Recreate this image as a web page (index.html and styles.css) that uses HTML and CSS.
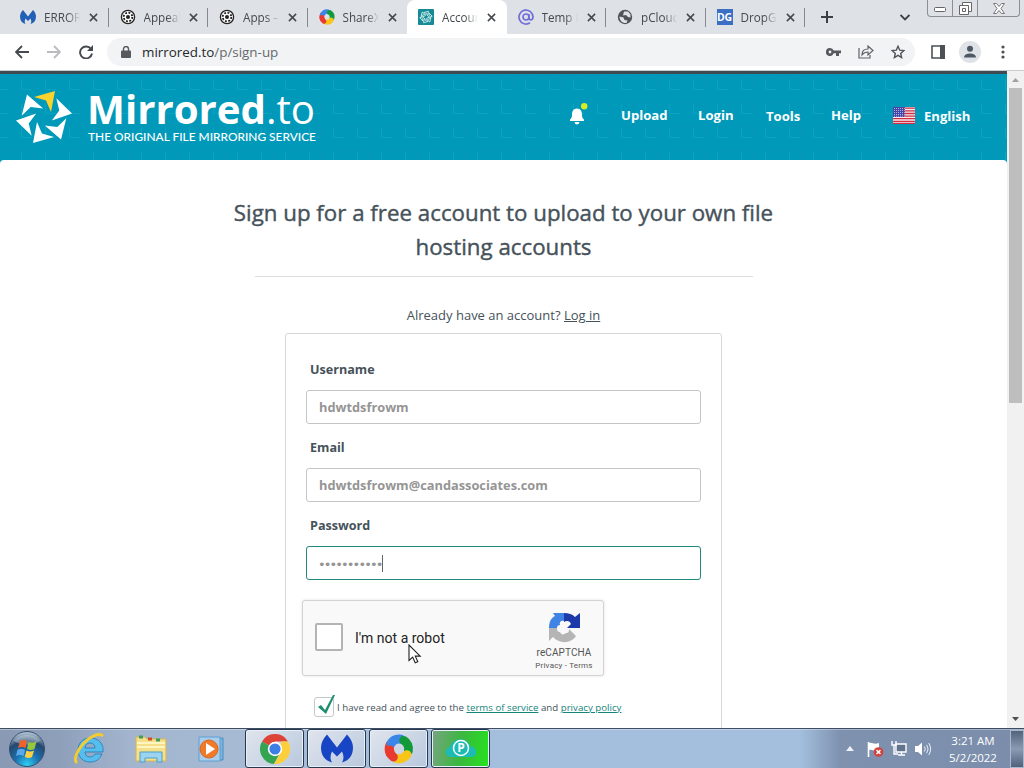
FILE: index.html
```
<!DOCTYPE html>
<html lang="en">
<head>
  <meta charset="UTF-8">
  <meta name="viewport" content="width=device-width, initial-scale=1.0">
  <title>Account sign up</title>
  <link rel="stylesheet" href="styles.css">
</head>
<body>

  <!-- shared shapes -->
  <svg class="defs" width="0" height="0">
    <symbol id="x" viewBox="0 0 10 10"><path d="M1 1l8 8M9 1L1 9" stroke="#45494d" stroke-width="1.7" fill="none"/></symbol>
    <symbol id="mb" viewBox="0 0 32 28"><path d="M6 0l10 13L26 0c4 4 6 9 6 13 0 8-4 13-11 15 2-3 2-7 0-11l-5 5-5-5c-2 4-2 8 0 11C4 26 0 21 0 13 0 9 2 4 6 0z"/></symbol>
    <symbol id="wheel" viewBox="0 0 16 16"><circle cx="8" cy="8" r="6.6" fill="#fff" stroke="#222" stroke-width="1.3"/><circle cx="8" cy="8" r="4.3" fill="none" stroke="#222" stroke-width="1.8" stroke-dasharray="1.9 1.47"/><circle cx="8" cy="8" r="2" fill="#222"/></symbol>
    <symbol id="sharex" viewBox="0 0 32 32">
      <g fill="none" stroke-width="9.5" stroke-linecap="round">
        <path d="M6.500 20.500A10.500 10.500 0 0 1 6.500 11.500" stroke="#e83a30"/>
        <path d="M7.500 10A10.500 10.500 0 0 1 18 5.600" stroke="#3b86e8"/>
        <path d="M21 6.800A10.500 10.500 0 0 1 26 18" stroke="#129a3a"/>
        <path d="M24.500 22A10.500 10.500 0 0 1 13 26" stroke="#f9c518"/>
        <path d="M10 24.600A10.500 10.500 0 0 1 6 17" stroke="#e83a30"/>
      </g>
    </symbol>
    <path id="blade" d="M39 1L18 7l12 3.500L35 22z"/>
    <g id="blades">
      <use href="#blade" transform="rotate(60 28 27)"/>
      <use href="#blade" transform="rotate(120 28 27)"/>
      <use href="#blade" transform="rotate(180 28 27)"/>
      <use href="#blade" transform="rotate(240 28 27)"/>
      <use href="#blade" transform="rotate(300 28 27)"/>
    </g>
  </svg>

  <div class="tabs">
    <div class="tab"><svg class="fav" fill="#2160b5"><use href="#mb"/></svg><span>ERROR</span><svg class="x"><use href="#x"/></svg></div>
    <div class="tab"><svg class="fav"><use href="#wheel"/></svg><span>Appeal</span><svg class="x"><use href="#x"/></svg></div>
    <div class="tab"><svg class="fav"><use href="#wheel"/></svg><span>Apps – D</span><svg class="x"><use href="#x"/></svg></div>
    <div class="tab nosep"><svg class="fav"><use href="#sharex"/></svg><span>ShareX</span><svg class="x"><use href="#x"/></svg></div>
    <div class="tab active"><svg class="fav" viewBox="-8 -9 72 72"><rect x="-8" y="-9" width="72" height="72" rx="4" fill="#168a95"/><g fill="#168a95" stroke="#d9f3f2" stroke-width="3.500"><use href="#blades"/><use href="#blade"/></g></svg><span>Account</span><svg class="x"><use href="#x"/></svg></div>
    <div class="tab"><svg class="fav" viewBox="0 0 16 16" fill="none" stroke="#7270d8" stroke-width="1.700"><circle cx="8" cy="8" r="3"/><path d="M11 5v4c0 2.600 4 2.600 4-1a7 7 0 1 0-3 5.800"/></svg><span>Temp M</span><svg class="x"><use href="#x"/></svg></div>
    <div class="tab"><svg class="fav" viewBox="0 0 16 16"><circle cx="8" cy="8" r="7.200" fill="#505458"/><path d="M2.500 7.500l4 1 1 2.500 3 .5-1 2.500c-4 .5-7-2.500-7-6.500zM7 2.500h4l2.500 3v3l-2.500-.5-2-2-3 .5z" fill="#dee1e6"/></svg><span>pCloud</span><svg class="x"><use href="#x"/></svg></div>
    <div class="tab"><b class="fav dg">DG</b><span>DropGa</span><svg class="x"><use href="#x"/></svg></div>
    <svg class="plus" viewBox="0 0 12 12"><path d="M6 0v12M0 6h12" stroke="#3c4043" stroke-width="2"/></svg>
    <svg class="chev" viewBox="0 0 10 7"><path d="M.5 1L5 5.500 9.500 1" fill="none" stroke="#3c4043" stroke-width="1.800"/></svg>
    <div class="winbtns">
      <i><svg width="12" height="6" viewBox="0 0 12 6"><rect x=".5" y=".5" width="11" height="4" rx="1" fill="#fff" stroke="#666"/></svg></i>
      <i><svg width="13" height="13" viewBox="0 0 13 13" fill="#fff" stroke="#666"><path d="M3.500.5h9v9h-9z"/><path d="M.5 3.500h9v9h-9z"/><path d="M3.500 6.500h3v3h-3z"/></svg></i>
      <i><svg width="12" height="11" viewBox="0 0 12 11"><path d="M.5.5h3L6 3.500 8.500.5h3L8 5.500l3.500 5h-3L6 7.500l-2.500 3h-3l3.500-5z" fill="#fff" stroke="#777"/></svg></i>
    </div>
  </div>

  <div class="toolbar">
    <svg class="nav-ic back" viewBox="0 0 14 14"><path d="M14 7H1M7 1L1 7l6 6" fill="none" stroke="#46494d" stroke-width="1.800"/></svg>
    <svg class="nav-ic fwd" viewBox="0 0 14 14"><path d="M0 7h13M7 1l6 6-6 6" fill="none" stroke="#b9bbbe" stroke-width="1.800"/></svg>
    <svg class="nav-ic reload" viewBox="0 0 14 14"><path d="M12 4a6 6 0 1 0 1 4.500" fill="none" stroke="#46494d" stroke-width="1.900"/><path d="M14 0v6H8z" fill="#46494d"/></svg>
    <div class="address">
      <svg width="10" height="12" viewBox="0 0 10 12"><rect y="4.500" width="10" height="7.500" rx="1" fill="#55585c"/><path d="M2.500 5V3a2.500 2.500 0 0 1 5 0v2" fill="none" stroke="#55585c" stroke-width="1.400"/></svg>
      <span class="url">mirrored.to<em>/p/sign-up</em></span>
      <svg width="15" height="8" viewBox="0 0 15 8"><path fill="#55585c" d="M4 0a4 4 0 1 0 3.700 5.300H10V8h3V5.300h2V2.600H7.700A4 4 0 0 0 4 0zm0 2.600a1.400 1.400 0 1 1 0 2.800 1.400 1.400 0 0 1 0-2.800z"/></svg>
      <svg class="share" width="16" height="14" viewBox="0 0 16 14" fill="none" stroke="#5f6368" stroke-width="1.200"><path d="M1 3v10h11v-3"/><path d="M4 10c0-4 2-6 6-6V1l5 4.500L10 10V7C7 7 5.500 8 4 10z"/></svg>
      <svg width="14" height="14" viewBox="0 0 14 14"><path d="M7 1.300l1.700 3.900 4.200.4-3.200 2.800.9 4.200L7 10.400l-3.600 2.200.9-4.200L1.100 5.600l4.200-.4z" fill="none" stroke="#505458" stroke-width="1.400"/></svg>
    </div>
    <svg class="panel" width="14" height="14" viewBox="0 0 14 14"><path d="M1 1h12v12H1z" fill="none" stroke="#4d5155" stroke-width="1.600"/><path d="M9 0h5v14H9z" fill="#4d5155"/></svg>
    <svg class="avatar" width="22" height="22" viewBox="0 0 22 22"><circle cx="11" cy="11" r="11" fill="#dfe2e6"/><circle cx="11" cy="7.800" r="3" fill="#4d5866"/><path d="M5 16.500c0-5.500 12-5.500 12 0z" fill="#4d5866"/></svg>
    <svg class="dots" width="4" height="14" viewBox="0 0 4 14" fill="#4d5155"><circle cx="2" cy="2" r="1.600"/><circle cx="2" cy="7" r="1.600"/><circle cx="2" cy="12" r="1.600"/></svg>
  </div>

  <div class="view">
    <div class="site">
      <header>
        <svg class="grid" width="1007" height="86"><defs><pattern id="sq" x="21" y="4" width="24" height="24" patternUnits="userSpaceOnUse"><path d="M.5 0v12M0 11.500h12" fill="none" stroke="#0ca2c0"/><path d="M0 .5h12M11.500 0v12" fill="none" stroke="#0895b3"/></pattern></defs><rect width="1007" height="86" fill="url(#sq)"/></svg>
        <div class="logo">
          <svg width="56" height="54" viewBox="0 0 56 54">
            <g fill="#fff"><use href="#blades"/></g>
            <use href="#blade" fill="#fcd22c"/>
          </svg>
          <div class="brand">
            <div class="name"><b>Mirrored</b>.to</div>
            <div class="tag">THE ORIGINAL FILE MIRRORING SERVICE</div>
          </div>
        </div>
        <nav>
          <svg class="bell" width="18" height="22" viewBox="0 0 18 22"><path d="M7 5.500c4 0 5 3 5 6.500 0 2 .7 3.500 2 4.500v1.500H0v-1.500c1.300-1 2-2.500 2-4.500 0-3.500 1-6.500 5-6.500z" fill="#fff"/><path d="M4.500 19h5a2.500 2.500 0 0 1-5 0z" fill="#fff"/><circle cx="14.200" cy="3.200" r="3.200" fill="#d7ee22"/></svg>
          <a class="n1">Upload</a>
          <a class="n2">Login</a>
          <a class="n3">Tools</a>
          <a class="n4">Help</a>
          <svg class="flag" width="22" height="17" viewBox="0 0 22 17"><rect width="22" height="17" fill="#f3edf0"/><path d="M0 1.200h22M0 3.900h22M0 6.500h22M0 9.100h22M0 11.700h22M0 14.300h22M0 16.500h22" stroke="#d52b3d" stroke-width="1.300"/><rect width="12" height="10" fill="#4546a5"/><path d="M1 1.500h11M1 3.500h11M1 5.500h11M1 7.500h11M1 9.200h11" stroke="#c9c9ee" stroke-width=".8" stroke-dasharray="1 1"/></svg>
          <a class="n5">English</a>
        </nav>
      </header>

      <main>
        <h1>Sign up for a free account to upload to your own file<br>hosting accounts</h1>
        <hr>
        <p class="already">Already have an account? <a>Log in</a></p>
        <form>
          <label>Username</label>
          <div class="field">hdwtdsfrowm</div>
          <label>Email</label>
          <div class="field">hdwtdsfrowm@candassociates.com</div>
          <label>Password</label>
          <div class="field focus"><span class="dotsrow">•••••••••••</span><i class="caret"></i></div>
          <div class="captcha">
            <div class="tick"></div>
            <span class="robot">I'm not a robot</span>
            <div class="rc">
              <svg width="31" height="31" viewBox="0 0 31 31">
                <path d="M4 1h11v8c-3-1-5 1-4 4-2 0-3 1-3 3H0C0 10 2 6 6 4z" fill="#3f83e4"/>
                <path d="M15 1c5 0 8 1 11 4l5-4v15H18l4-4c-1-3-4-4-7-2z" fill="#1c3aa9"/>
                <path d="M0 16h8c0 3 1 4 3 4 1 3 4 3 6 1 3 0 3-2 3-4l7 7c-5 8-17 8-23 1l-4 4z" fill="#b5b5b5"/>
              </svg>
              <span class="rcname">reCAPTCHA</span>
              <span class="rcterms">Privacy - Terms</span>
            </div>
          </div>
          <div class="agree">
            <div class="checked"><svg width="20" height="22" viewBox="0 0 20 22"><path d="M2 13l3-2 4 5L17 1l2 0-9 19z" fill="#1d8f70"/></svg></div>
            <span>I have read and agree to the <a>terms of service</a> and <a>privacy policy</a></span>
          </div>
        </form>
      </main>
    </div>
    <div class="scroll">
      <svg width="17" height="16" viewBox="0 0 17 16"><path d="M5 11l3.500-4 3.500 4z" fill="#a0a0a0"/></svg>
      <div class="thumb"></div>
      <svg class="down" width="17" height="16" viewBox="0 0 17 16"><path d="M5 5l3.500 4L12 5z" fill="#505050"/></svg>
    </div>
  </div>

  <svg class="cursor" width="17" height="23" viewBox="0 0 17 23"><path d="M1 1v15.500l3.700-3.400 2.500 5.700 2.600-1.100-2.500-5.600h4.900z" fill="#fff" stroke="#222" stroke-width="1.100"/></svg>

  <div class="taskbar">
    <svg class="start" width="38" height="38" viewBox="0 0 38 38">
      <defs>
        <radialGradient id="orb" cx=".5" cy=".95" r=".9"><stop offset="0" stop-color="#2ed0f4"/><stop offset=".4" stop-color="#1b6fae"/><stop offset=".75" stop-color="#25486f"/><stop offset="1" stop-color="#a9bccd"/></radialGradient>
      </defs>
      <circle cx="19" cy="19" r="17.500" fill="url(#orb)" stroke="#38506e"/>
      <path d="M6 11C12 3 26 3 32 11c-8 5-18 5-26 0z" fill="#fff" opacity=".3"/>
      <path d="M12 11c3-1.500 5-1.500 7 .2l-1.500 7c-2-1.500-5-1.500-7.500 0z" fill="#f0622c"/>
      <path d="M20.500 12c2.500 1.300 5 1 8-.5l-2 7.500c-3 1.500-5 1.200-7.500-.2z" fill="#96c83c"/>
      <path d="M9.500 19.800c3-1.500 5-1.200 7.500 0L15.500 26c-2-1.300-5-1.300-7.500 0z" fill="#58a8ec"/>
      <path d="M18.500 20.500c2.500 1.300 5 1.200 7.600 0L24 27c-3 1.500-5 1-7.200-.3z" fill="#fbd044"/>
    </svg>
    <svg class="ie" width="32" height="32" viewBox="0 0 32 32">
      <path d="M16 5C9 5 4 10 4 17s5 12 12 12c6 0 10-3 12-8h-7c-1 2-3 3-5 3-3 0-5-2-5-5h18c1-8-4-14-13-14zm-5 10c0-3 2-5 5-5s5 2 5 5z" fill="#56bdec" stroke="#2582bd" stroke-width=".9" fill-rule="evenodd"/>
      <path d="M3 30C-1 27 3 18 9 11S25-1 29 3" fill="none" stroke="#f3cc30" stroke-width="2.800"/>
    </svg>
    <svg class="folder" width="32" height="28" viewBox="0 0 32 28">
      <path d="M1 2h9l2 2h19v22H1z" fill="#f4df8b" stroke="#d9b650"/>
      <path d="M4 2h4M21 5h4" stroke="#3d9b5e" stroke-width="3"/><path d="M13 4h4" stroke="#d44b26" stroke-width="3"/>
      <path d="M2 8h28M2 12h28" stroke="#fff5c1" stroke-width="2"/>
      <path d="M5 27V17h22v10h-5v-4H10v4z" fill="#9bd3f0" stroke="#4a9fcb"/>
    </svg>
    <svg class="wmp" width="27" height="26" viewBox="0 0 27 26"><path d="M6 2h19v22H6z" fill="#78b4e0" stroke="#4c90c6"/><path d="M1 1h21v24H1z" fill="#a9cdec" stroke="#5f9fd0"/><circle cx="11" cy="13" r="9" fill="#ef7b2a" stroke="#dc641d"/><path d="M8 7l9 6-9 6z" fill="#fff"/></svg>
    <div class="apps">
      <div class="app"><svg width="30" height="30" viewBox="0 0 30 30"><path d="M15 15L2 7.500A15 15 0 0 1 28 7.500H15z" fill="#dd4336"/><path d="M2 7.500A15 15 0 0 0 14 30l6.500-12L15 15z" fill="#34a352"/><path d="M28 7.500A15 15 0 0 1 14 30l7-12V7.500z" fill="#fdd03b"/><circle cx="15" cy="15" r="7.200" fill="#fff"/><circle cx="15" cy="15" r="5.600" fill="#3b7fe6"/></svg></div>
      <div class="app"><svg width="32" height="29" fill="#1745c4"><use href="#mb"/></svg></div>
      <div class="app"><svg width="30" height="30"><use href="#sharex"/></svg></div>
      <div class="app green"><svg width="32" height="24" viewBox="0 0 32 24"><path d="M6 20C-1 20-1 11 5 10 7 1 22-1 25 9c8 1 8 11 1 11z" fill="#1cbcb4"/><circle cx="16" cy="11" r="7.500" fill="#1cbcb4" stroke="#fff" stroke-width="1.500"/><text x="16" y="15.300" text-anchor="middle" class="p">P</text></svg></div>
    </div>
    <div class="tray">
      <svg width="8" height="5" viewBox="0 0 8 5"><path d="M0 5l4-5 4 5z" fill="#eef2f8"/></svg>
      <svg class="t1" width="17" height="16" viewBox="0 0 17 16"><path d="M1.500 1v15" stroke="#fff" stroke-width="1.600"/><path d="M2 2c3-1 5 2 10 0v7c-4 2-7-1-10 0z" fill="#fff"/><circle cx="11.500" cy="11" r="4.800" fill="#d4403c"/><path d="M9.500 9l4 4M13.500 9l-4 4" stroke="#fff" stroke-width="1.500"/></svg>
      <svg class="t2" width="16" height="15" viewBox="0 0 16 15"><path d="M5 3h10v8H5zM7 14h7M10.500 11v3" fill="#62738d" stroke="#fff" stroke-width="1.400"/><path d="M1 0v4h4V0M3 4v9h4" fill="none" stroke="#fff" stroke-width="1.400"/></svg>
      <svg class="t3" width="16" height="14" viewBox="0 0 16 14"><path d="M0 4h3l4-3.500v13L3 10H0z" fill="#fff"/><path d="M9.500 4.500q1.500 2.500 0 5M11.700 2.800q2.800 4.200 0 8.400M13.800 1q3.600 6 0 12" fill="none" stroke="#e8eef5"/></svg>
    </div>
    <div class="clock">3:21 AM<br>5/2/2022</div>
    <div class="desk"></div>
  </div>

</body>
</html>
```
FILE: styles.css
```
* {
  box-sizing: border-box;
}

body {
  margin: 0;
  width: 1024px;
  height: 768px;
  overflow: hidden;
  display: flex;
  flex-direction: column;
  font-family: "Open Sans", "Noto Sans", sans-serif;
  background: #fff;
}

svg {
  display: block;
  flex: none;
}

.defs {
  position: absolute;
}

/* browser tabs */
.tabs {
  height: 34px;
  flex: none;
  background: #dee1e6;
  display: flex;
  align-items: center;
  padding-left: 9px;
}

.tab {
  width: 99.5px;
  height: 34px;
  flex: none;
  display: flex;
  align-items: center;
  padding-left: 11px;
  position: relative;
  font-size: 11.7px;
  color: #45494d;
}

.tab::after {
  content: "";
  position: absolute;
  right: 0;
  top: 8px;
  width: 1px;
  height: 19px;
  background: #85898e;
}

.tab.nosep::after, .tab.active::after {
  display: none;
}

.tab.active {
  background: #fff;
  border-radius: 8px 8px 0 0;
}

.fav {
  width: 16px;
  height: 16px;
  flex: none;
}

.dg {
  background: #3a6fc4;
  color: #fff;
  font-size: 10.5px;
  line-height: 16px;
  text-align: center;
  letter-spacing: -0.3px;
}

.tab span {
  width: 36px;
  margin-left: 8px;
  overflow: hidden;
  white-space: nowrap;
  -webkit-mask-image: linear-gradient(90deg, #000 65%, transparent);
  mask-image: linear-gradient(90deg, #000 65%, transparent);
}

.x {
  width: 9px;
  height: 9px;
  margin-left: 9px;
}

.plus {
  width: 12px;
  height: 12px;
  margin-left: 16px;
}

.chev {
  width: 10px;
  height: 7px;
  margin-left: 67px;
}

.winbtns {
  display: flex;
  width: 93px;
  height: 17px;
  margin-left: 17px;
  align-self: flex-start;
  border: 1px solid #8b8f95;
  border-top: 0;
  border-radius: 0 0 4px 4px;
}

.winbtns i {
  width: 25px;
  display: flex;
  align-items: center;
  justify-content: center;
  border-right: 1px solid #8b8f95;
}

.winbtns i:first-child {
  padding-top: 3px;
}

.winbtns i:last-child {
  flex: 1;
  border: 0;
}

/* toolbar */
.toolbar {
  height: 37px;
  flex: none;
  display: flex;
  align-items: center;
  border-bottom: 1px solid #c9cccf;
}

.nav-ic {
  width: 14px;
  height: 14px;
}

.back {
  margin-left: 15px;
}

.fwd {
  margin-left: 18px;
}

.reload {
  margin-left: 18px;
}

.address {
  width: 808px;
  height: 28px;
  margin-left: 14px;
  padding: 0 10px 0 14px;
  border-radius: 14px;
  background: #f1f3f4;
  display: flex;
  align-items: center;
}

.url {
  flex: 1;
  margin-left: 11px;
  font-size: 13.4px;
  color: #25282b;
}

.url em {
  font-style: normal;
  color: #66696d;
}

.share {
  margin: 0 17px 0 17px;
}

.panel {
  margin-left: 16px;
}

.avatar {
  margin-left: 14px;
}

.dots {
  margin-left: 20px;
}

/* page */
.view {
  height: 657px;
  flex: none;
  display: flex;
}

.site {
  width: 1007px;
  height: 657px;
  overflow: hidden;
  border-top: 3px solid #3f4b52;
  background: #0099b9;
}

header {
  height: 86px;
  position: relative;
  display: flex;
  justify-content: space-between;
}

.grid {
  position: absolute;
  left: 0;
  top: 0;
}

.logo {
  display: flex;
  position: relative;
  padding: 16px 0 0 16px;
}

.brand {
  margin-left: 15px;
  color: #fff;
  white-space: nowrap;
}

.name {
  height: 39px;
  font-size: 40.2px;
  line-height: 38px;
}

.name b {
  font-weight: 700;
}

.tag {
  margin-left: 1px;
  font: 500 11.9px/16px Lato, sans-serif;
}

nav {
  display: flex;
  position: relative;
  width: 437px;
  color: #fff;
  font-size: 13.1px;
  font-weight: 700;
  line-height: 20px;
  padding-top: 31px;
}

nav a {
  flex: none;
  white-space: nowrap;
}

.bell {
  margin-top: -2px;
}

.n1 {
  width: 77px;
  margin-left: 33px;
}

.n2 {
  width: 68px;
}

.n3 {
  width: 65px;
  padding-top: 1px;
}

.n4 {
  width: 62px;
}

.flag {
  margin-top: 2px;
}

.n5 {
  margin-left: 9px;
  padding-top: 1px;
}

main {
  height: 568px;
  padding-top: 36px;
  background: #fff;
  border-radius: 4px 4px 0 0;
  color: #46525a;
}

h1 {
  margin: 0;
  text-align: center;
  font-size: 22.3px;
  font-weight: 400;
  line-height: 34px;
  -webkit-text-stroke: 0.4px #46525a;
}

hr {
  width: 498px;
  height: 1px;
  margin: 12px auto 0;
  border: 0;
  background: #dcdfe0;
}

.already {
  margin: 28px 0 8px;
  text-align: center;
  font-size: 13px;
  line-height: 20px;
}

.already a {
  text-decoration: underline;
}

form {
  width: 437px;
  height: 420px;
  margin: 0 auto;
  padding: 26px 20px 0;
  border: 1px solid #d5d8da;
  border-radius: 3px;
}

label {
  display: block;
  margin-left: 4px;
  font-size: 12.6px;
  font-weight: 700;
  line-height: 20px;
}

.field {
  display: flex;
  align-items: center;
  height: 34px;
  margin: 10px 0 14px;
  padding-left: 12px;
  border: 1px solid #c3c6c8;
  border-radius: 3px;
  font-size: 12.8px;
  font-weight: 700;
  color: #959595;
}

.field.focus {
  border-color: #21897f;
}

.dotsrow {
  margin-left: -1px;
  padding-top: 2px;
  font-family: "DejaVu Sans", sans-serif;
  font-size: 13px;
  font-weight: 400;
  letter-spacing: -1.9px;
}

.caret {
  width: 1px;
  height: 17px;
  margin-left: 1px;
  background: #666;
}

.captcha {
  display: flex;
  width: 302px;
  height: 76px;
  margin: 20px 0 0 -4px;
  padding-left: 12px;
  background: #f9f9f9;
  border: 1px solid #d3d3d3;
  border-radius: 3px;
  box-shadow: 0 0 3px rgba(0, 0, 0, 0.12);
}

.tick {
  width: 28px;
  height: 28px;
  margin-top: 22px;
  border: 2px solid #b4b4b4;
  border-radius: 2px;
  background: #fff;
}

.robot {
  margin-left: 12px;
  padding-top: 27px;
  font: 14px/20px Roboto, sans-serif;
  color: #222;
}

.rc {
  width: 70px;
  margin-left: auto;
  margin-right: 4px;
  padding-top: 11px;
  display: flex;
  flex-direction: column;
  align-items: center;
  font-family: Roboto, sans-serif;
  color: #555;
}

.rcname {
  margin-top: 4px;
  font-size: 10px;
  line-height: 12px;
  letter-spacing: 0.1px;
}

.rcterms {
  font-size: 8px;
  line-height: 13px;
  letter-spacing: 0.2px;
  white-space: nowrap;
}

.agree {
  display: flex;
  align-items: center;
  margin: 21px 0 0 8px;
  font-size: 9.7px;
}

.agree span {
  margin-left: 3px;
  white-space: nowrap;
}

.agree a {
  color: #16857c;
  text-decoration: underline;
}

.checked {
  position: relative;
  width: 20px;
  height: 20px;
  border: 1px solid #c4c7c8;
  border-radius: 3px;
}

.checked svg {
  position: absolute;
  left: 1px;
  top: -4px;
}

/* scrollbar */
.scroll {
  width: 17px;
  display: flex;
  flex-direction: column;
  background: #f1f1f1;
}

.thumb {
  width: 13px;
  height: 315px;
  margin: 1px 0 0 2px;
  background: #bebebe;
}

.down {
  margin-top: auto;
}

.cursor {
  position: absolute;
  left: 408px;
  top: 644px;
}

/* taskbar */
.taskbar {
  height: 40px;
  flex: none;
  display: flex;
  align-items: center;
  border-top: 1px solid #3e4d64;
  background: linear-gradient(90deg, #8a9ab5 0, #8e9fba 60px, #a3b5ce 130px, #a6bad3 240px, #a3bfdd 500px, #a3bfdd 800px, #7e92b0 840px, #7b8daa 1024px);
  box-shadow: inset 0 1px 0 rgba(255, 255, 255, 0.35);
}

.start {
  margin-left: 8px;
}

.ie {
  margin-left: 28px;
}

.folder {
  margin-left: 29px;
}

.wmp {
  margin-left: 31px;
}

.apps {
  display: flex;
  gap: 3px;
  margin-left: 20px;
}

.app {
  width: 59px;
  height: 39px;
  display: flex;
  align-items: center;
  justify-content: center;
  border: 1px solid #26384f;
  border-radius: 3px;
  background: linear-gradient(135deg, #e0e5ed, #b9c8de);
  box-shadow: inset 0 0 0 1px #e8eff7;
}

.app.green {
  background: linear-gradient(100deg, #79a482, #3ab83e 50%, #25e41e);
}

.p {
  font: bold 12px "Open Sans", sans-serif;
  fill: #fff;
}

.tray {
  display: flex;
  align-items: center;
  margin-left: 356px;
}

.t1 {
  margin-left: 13px;
}

.t2 {
  margin-left: 7px;
}

.t3 {
  margin-left: 8px;
}

.clock {
  width: 60px;
  margin-left: 12px;
  text-align: center;
  color: #fff;
  font-size: 11.5px;
  line-height: 17px;
}

.desk {
  width: 14px;
  height: 38px;
  margin-left: auto;
  border: 1px solid #a9b8cc;
  background: linear-gradient(#53637b, #8a9bb4 50%, #4f617b);
}
```
